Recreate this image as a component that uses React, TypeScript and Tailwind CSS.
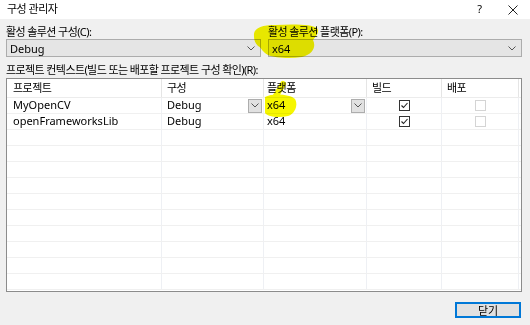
import React from 'react'

const font = { fontFamily: '"Noto Sans", "Noto Sans CJK KR", sans-serif' }

const cols = [
  { label: '프로젝트', w: 'w-[155px]', pl: 'pl-[6px]' },
  { label: '구성', w: 'w-[102px]', pl: 'pl-[5px]' },
  { label: '플랫폼', w: 'w-[103px]', pl: 'pl-[3px]' },
  { label: '빌드', w: 'w-[75px]', pl: 'pl-[5px]' },
  { label: '배포', w: 'w-[77px]', pl: 'pl-[5px]' },
]

const rows = [
  { project: 'MyOpenCV', config: 'Debug', platform: 'x64', build: true, editing: true },
  { project: 'openFrameworksLib', config: 'Debug', platform: 'x64', build: true, editing: false },
]

function Chevron() {
  return (
    <svg width="8" height="5" viewBox="0 0 8 5" className="block">
      <polyline points="0.5,0.5 4,4 7.5,0.5" fill="none" stroke="#555" strokeWidth="1" />
    </svg>
  )
}

function Combo({ value }: { value: string }) {
  return (
    <div className="h-[18px] flex items-center justify-between border border-[#acacac] bg-[#e5e5e5] pl-[3px] pr-[5px] text-[11px] leading-none">
      <span>{value}</span>
      <Chevron />
    </div>
  )
}

function Check({ checked, disabled }: { checked?: boolean; disabled?: boolean }) {
  return (
    <div
      className={
        disabled
          ? 'w-[11px] h-[11px] border border-[#d4d4d4] bg-white'
          : 'w-[11px] h-[11px] border border-[#333] bg-white flex items-center justify-center'
      }
    >
      {checked && (
        <svg width="9" height="9" viewBox="0 0 9 9">
          <polyline points="1.5,4.5 3.5,6.5 7.5,2" fill="none" stroke="#222" strokeWidth="1.1" />
        </svg>
      )}
    </div>
  )
}

function CellDrop() {
  return (
    <div className="w-[14px] h-[14px] border border-[#adadad] bg-[#e1e1e1] flex items-center justify-center mr-[1px]">
      <Chevron />
    </div>
  )
}

export default function App() {
  const empty = Array.from({ length: 10 })
  return (
    <div className="relative w-[530px] h-[325px] bg-[#f0f0f0] overflow-hidden text-black" style={font}>
      <div className="h-[19px] bg-white flex items-center justify-between pl-[7px] pr-[12px] text-[11px]">
        <span className="tracking-[-0.5px]">구성 관리자</span>
        <div className="flex items-center gap-[26px]">
          <span className="text-[11px]">?</span>
          <svg width="10" height="10" viewBox="0 0 10 10">
            <path d="M0.5 0.5 L9.5 9.5 M9.5 0.5 L0.5 9.5" stroke="#222" strokeWidth="1" />
          </svg>
        </div>
      </div>

      <div className="px-[6px]">
        <div className="flex gap-[7px] mt-[5px]">
          <div className="w-[255px]">
            <div className="h-[15px] text-[11px] leading-[15px] tracking-[-0.6px]">활성 솔루션 구성(C):</div>
            <Combo value="Debug" />
          </div>
          <div className="w-[254px]">
            <div className="h-[15px] text-[11px] leading-[15px] tracking-[-0.6px]">활성 솔루션 플랫폼(P):</div>
            <Combo value="x64" />
          </div>
        </div>

        <div className="mt-[5px] h-[16px] text-[11px] leading-[16px] tracking-[-0.6px]">
          프로젝트 컨텍스트(빌드 또는 배포할 프로젝트 구성 확인)(R):
        </div>

        <div className="w-[516px] h-[214px] border border-[#8c8c8c] bg-white flex flex-col text-[11px]">
          <div className="flex h-[19px] border-b border-[#ececec] tracking-[-0.5px]">
            {cols.map((c) => (
              <div key={c.label} className={`${c.w} ${c.pl} border-r border-[#e5e5e5] flex items-center`}>
                {c.label}
              </div>
            ))}
            <div className="flex-1" />
          </div>
          {rows.map((r) => (
            <div key={r.project} className="flex h-[16px] border-b border-[#f0f0f0]">
              <div className="w-[155px] pl-[6px] border-r border-[#eef0f4] flex items-center">{r.project}</div>
              <div className="w-[102px] pl-[5px] border-r border-[#eef0f4] flex items-center justify-between">
                <span>{r.config}</span>
                {r.editing && <CellDrop />}
              </div>
              <div className="w-[103px] pl-[3px] border-r border-[#eef0f4] flex items-center justify-between">
                <span>{r.platform}</span>
                {r.editing && <CellDrop />}
              </div>
              <div className="w-[75px] border-r border-[#eef0f4] flex items-center justify-center">
                <Check checked={r.build} />
              </div>
              <div className="w-[77px] border-r border-[#eef0f4] flex items-center justify-center">
                <Check disabled />
              </div>
              <div className="flex-1" />
            </div>
          ))}
          {empty.map((_, i) => (
            <div key={i} className="flex h-[16px] border-b border-[#f0f0f0]">
              <div className="w-[155px] border-r border-[#eef0f4]" />
              <div className="w-[102px] border-r border-[#eef0f4]" />
              <div className="w-[103px] border-r border-[#eef0f4]" />
              <div className="w-[75px] border-r border-[#eef0f4]" />
              <div className="w-[77px] border-r border-[#eef0f4]" />
              <div className="flex-1" />
            </div>
          ))}
        </div>

        <div className="flex justify-end mt-[10px] pr-[3px]">
          <button className="w-[66px] h-[16px] border-2 border-[#0078d7] bg-[#e1e1e1] text-[11px] leading-none flex items-center justify-center">
            닫기
          </button>
        </div>
      </div>

      <svg
        className="absolute inset-0 pointer-events-none mix-blend-multiply"
        width="530"
        height="325"
        viewBox="0 0 530 325"
      >
        <path
          d="M254 36 C253 28 262 25 275 25 C292 24 312 24 317 28 C320 32 316 36 313 40 C316 46 314 54 302 57 C290 59 275 58 268 55 C262 52 262 48 258 46 C255 43 254 40 254 36 Z"
          fill="#f6f600"
        />
        <path
          d="M265 97 C272 93 290 94 295 99 C298 104 296 113 288 116 C279 118 268 117 265 113 Z"
          fill="#f6f600"
        />
        <path d="M283 84 L274 99" stroke="#f6f600" strokeWidth="6" strokeLinecap="round" />
      </svg>
    </div>
  )
}
